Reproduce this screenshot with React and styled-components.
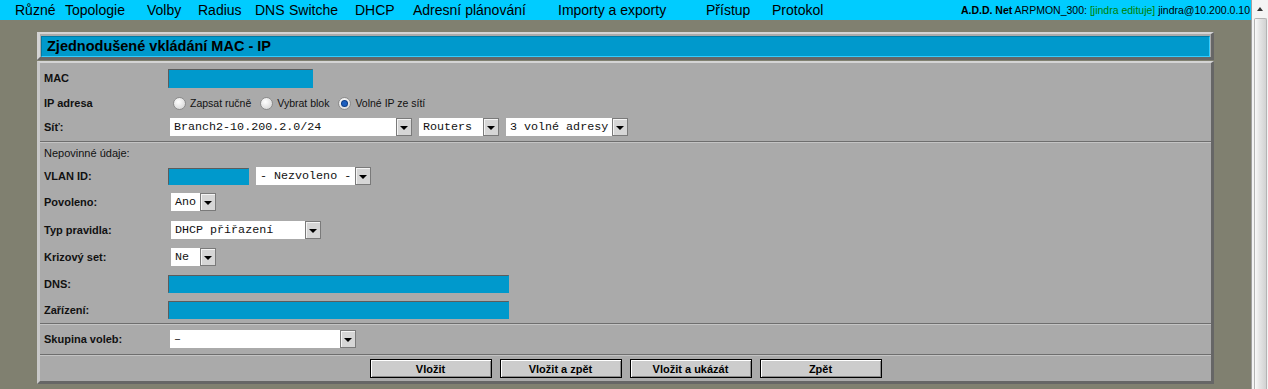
import styled, { createGlobalStyle } from "styled-components";

const GlobalStyle = createGlobalStyle`
  html, body {
    margin: 0;
    padding: 0;
    background: #808070;
    overflow: hidden;
  }
  body {
    font-family: "Liberation Sans", Arial, sans-serif;
    color: #000;
  }
`;

const Page = styled.div`
  display: flex;
  height: 389px;
`;

const Main = styled.div`
  flex: 1;
  min-width: 0;
`;

const Nav = styled.div`
  height: 20px;
  background: #00ccff;
  display: flex;
  align-items: center;
  padding: 0 1px 0 15px;
  font-size: 14px;
  white-space: nowrap;
  overflow: hidden;
`;

const NavItem = styled.span`
  flex: none;
  width: ${(p) => p.$w}px;
`;

const Status = styled.span`
  flex: none;
  margin-left: auto;
  font-size: 10.5px;
`;

const Strong = styled.b`
  font-weight: bold;
`;

const Editing = styled.span`
  color: #008000;
`;

const Panel = styled.div`
  margin: 12px 0 0 37px;
  width: 1177px;
`;

const TitleFrame = styled.div`
  border-style: solid;
  border-width: 2px 3px 3px 3px;
  border-color: #d4d4d4 #666 #666 #d4d4d4;
  background: #aaa;
  padding: 2px 1px 0 1px;
`;

const Title = styled.h1`
  margin: 0;
  height: 21px;
  box-sizing: border-box;
  background: #0099cc;
  border: 1px solid;
  border-color: #007aa3 #33ccff #33ccff #007aa3;
  padding-left: 5px;
  font-size: 14.5px;
  line-height: 19px;
  font-weight: bold;
`;

const Body = styled.div`
  margin-top: 1px;
  border-style: solid;
  border-width: 2px 3px 3px 3px;
  border-color: #d4d4d4 #666 #666 #c8c8c8;
  background: #aaa;
`;

const Section = styled.div`
  padding: ${(p) => p.$pad || "0"};
  border-top: ${(p) => (p.$sep ? "1px solid #6e6e6e" : "none")};
  box-shadow: ${(p) => (p.$sep ? "inset 0 1px 0 #c4c4c4" : "none")};
`;

const Row = styled.div`
  display: grid;
  grid-template-columns: 124px 1fr;
  align-items: center;
  height: ${(p) => p.$h}px;
  padding-left: 4px;
`;

const Label = styled.span`
  font-size: 11px;
  font-weight: ${(p) => (p.$plain ? "normal" : "bold")};
  color: #111;
`;

const Controls = styled.div`
  display: flex;
  align-items: center;
  gap: ${(p) => p.$gap ?? 7}px;
`;

const Input = styled.input`
  box-sizing: border-box;
  width: ${(p) => p.$w}px;
  height: ${(p) => p.$h}px;
  margin: 0;
  padding: 0 3px;
  background: #0099cc;
  border: 1px solid;
  border-color: #5c5c5c #0099cc #0099cc #5c5c5c;
  outline: none;
`;

const SelectBox = styled.div`
  display: flex;
  height: 18px;
  margin-left: ${(p) => p.$ml || 0}px;
`;

const SelectField = styled.div`
  box-sizing: border-box;
  width: ${(p) => p.$w}px;
  background: #fff;
  padding-left: 4px;
  font-family: "Liberation Mono", "Courier New", monospace;
  font-size: 11.7px;
  line-height: 18px;
  color: #111;
  white-space: pre;
  overflow: hidden;
`;

const SelectButton = styled.div`
  box-sizing: border-box;
  width: 16px;
  border: 1px solid #7a7a7a;
  background: #d6d6d6;
  box-shadow: inset 1px 1px 0 #f4f4f4;
  display: flex;
  align-items: center;
  justify-content: center;
  padding-top: 2px;
`;

const DownArrow = styled.span`
  width: 0;
  height: 0;
  border-left: 4px solid transparent;
  border-right: 4px solid transparent;
  border-top: 4px solid #000;
`;

const RadioGroup = styled.div`
  display: flex;
  align-items: center;
  padding-left: 5px;
`;

const RadioOption = styled.label`
  display: flex;
  align-items: center;
  gap: 4px;
  margin-right: 9px;
  font-size: 10.5px;
  color: #111;
`;

const Radio = styled.span`
  position: relative;
  width: 13px;
  height: 13px;
  box-sizing: border-box;
  border-radius: 50%;
  border: 1px solid #8c8c8c;
  background: radial-gradient(circle at 40% 35%, #ffffff, #cfcfcf);

  &::after {
    content: "";
    display: ${(p) => (p.$checked ? "block" : "none")};
    position: absolute;
    left: 3px;
    top: 3px;
    width: 5px;
    height: 5px;
    border-radius: 50%;
    background: #1d5fbf;
    box-shadow: 0 0 0 1px #0b3c86;
  }
`;

const ButtonRow = styled.div`
  display: flex;
  justify-content: center;
  gap: 8px;
`;

const ActionButton = styled.button`
  width: 122px;
  height: 19px;
  padding: 0;
  background: #cccccc;
  border: 1px solid #000;
  box-shadow: inset 1px 1px 0 #fff, inset -1px -1px 0 #8a8a8a;
  font-family: "Liberation Sans", Arial, sans-serif;
  font-size: 11px;
  font-weight: bold;
  color: #000;
`;

const Scrollbar = styled.div`
  flex: none;
  width: 17px;
  box-sizing: border-box;
  border-left: 1px solid #a0a0a0;
  background: #f4f4f4;
  display: flex;
  flex-direction: column;
`;

const ScrollArrow = styled.div`
  height: 18px;
  display: flex;
  align-items: center;
  justify-content: center;

  &::before {
    content: "";
    border-left: 3px solid transparent;
    border-right: 3px solid transparent;
    border-bottom: 4px solid #333;
  }
`;

const ScrollThumb = styled.div`
  flex: 1;
  margin: 0 1px 0 2px;
  border: 1px solid #b4b4b4;
  border-bottom: none;
  border-radius: 2px 2px 0 0;
  background: linear-gradient(90deg, #fafafa, #e4e4e4 45%, #d2d2d2);
`;

const navItems = [
  ["Různé", 15],
  ["Topologie", 65],
  ["Volby", 147],
  ["Radius", 198],
  ["DNS", 255],
  ["Switche", 289],
  ["DHCP", 355],
  ["Adresní plánování", 413],
  ["Importy a exporty", 558],
  ["Přístup", 706],
  ["Protokol", 772],
];
const navEnd = 900;

function Select({ value, w, ml }) {
  return (
    <SelectBox $ml={ml}>
      <SelectField $w={w}>{value}</SelectField>
      <SelectButton>
        <DownArrow />
      </SelectButton>
    </SelectBox>
  );
}

export default function App() {
  return (
    <>
      <GlobalStyle />
      <Page>
        <Main>
          <Nav>
            {navItems.map(([name, x], i) => {
              const next = i + 1 < navItems.length ? navItems[i + 1][1] : navEnd;
              return (
                <NavItem key={name} $w={next - x}>
                  {name}
                </NavItem>
              );
            })}
            <Status>
              <Strong>A.D.D. Net</Strong> ARPMON_300:{" "}
              <Editing>[jindra edituje]</Editing> jindra@10.200.0.10
            </Status>
          </Nav>

          <Panel>
            <TitleFrame>
              <Title>Zjednodušené vkládání MAC - IP</Title>
            </TitleFrame>

            <Body>
              <Section $pad="3px 0">
                <Row $h={24}>
                  <Label>MAC</Label>
                  <Controls>
                    <Input $w={145} $h={19} readOnly />
                  </Controls>
                </Row>
                <Row $h={26}>
                  <Label>IP adresa</Label>
                  <RadioGroup>
                    <RadioOption>
                      <Radio />
                      Zapsat ručně
                    </RadioOption>
                    <RadioOption>
                      <Radio />
                      Vybrat blok
                    </RadioOption>
                    <RadioOption>
                      <Radio $checked />
                      Volné IP ze sítí
                    </RadioOption>
                  </RadioGroup>
                </Row>
                <Row $h={22}>
                  <Label>Síť:</Label>
                  <Controls $gap={7}>
                    <Select value="Branch2-10.200.2.0/24" w={226} ml={2} />
                    <Select value="Routers" w={64} />
                    <Select value="3 volné adresy" w={106} />
                  </Controls>
                </Row>
              </Section>

              <Section $sep>
                <Row $h={22}>
                  <Label $plain>Nepovinné údaje:</Label>
                </Row>
                <Row $h={24}>
                  <Label>VLAN ID:</Label>
                  <Controls $gap={7}>
                    <Input $w={81} $h={17} readOnly />
                    <Select value="- Nezvoleno -" w={99} />
                  </Controls>
                </Row>
                <Row $h={28}>
                  <Label>Povoleno:</Label>
                  <Controls>
                    <Select value="Ano" w={29} ml={3} />
                  </Controls>
                </Row>
                <Row $h={27}>
                  <Label>Typ pravidla:</Label>
                  <Controls>
                    <Select value="DHCP přiřazení" w={134} ml={3} />
                  </Controls>
                </Row>
                <Row $h={27}>
                  <Label>Krizový set:</Label>
                  <Controls>
                    <Select value="Ne" w={29} ml={3} />
                  </Controls>
                </Row>
                <Row $h={27}>
                  <Label>DNS:</Label>
                  <Controls>
                    <Input $w={341} $h={18} readOnly />
                  </Controls>
                </Row>
                <Row $h={26}>
                  <Label>Zařízení:</Label>
                  <Controls>
                    <Input $w={341} $h={18} readOnly />
                  </Controls>
                </Row>
              </Section>

              <Section $sep>
                <Row $h={30}>
                  <Label>Skupina voleb:</Label>
                  <Controls>
                    <Select value="–" w={170} ml={2} />
                  </Controls>
                </Row>
              </Section>

              <Section $sep $pad="4px 0 3px">
                <ButtonRow>
                  <ActionButton>Vložit</ActionButton>
                  <ActionButton>Vložit a zpět</ActionButton>
                  <ActionButton>Vložit a ukázát</ActionButton>
                  <ActionButton>Zpět</ActionButton>
                </ButtonRow>
              </Section>
            </Body>
          </Panel>
        </Main>

        <Scrollbar>
          <ScrollArrow />
          <ScrollThumb />
        </Scrollbar>
      </Page>
    </>
  );
}
